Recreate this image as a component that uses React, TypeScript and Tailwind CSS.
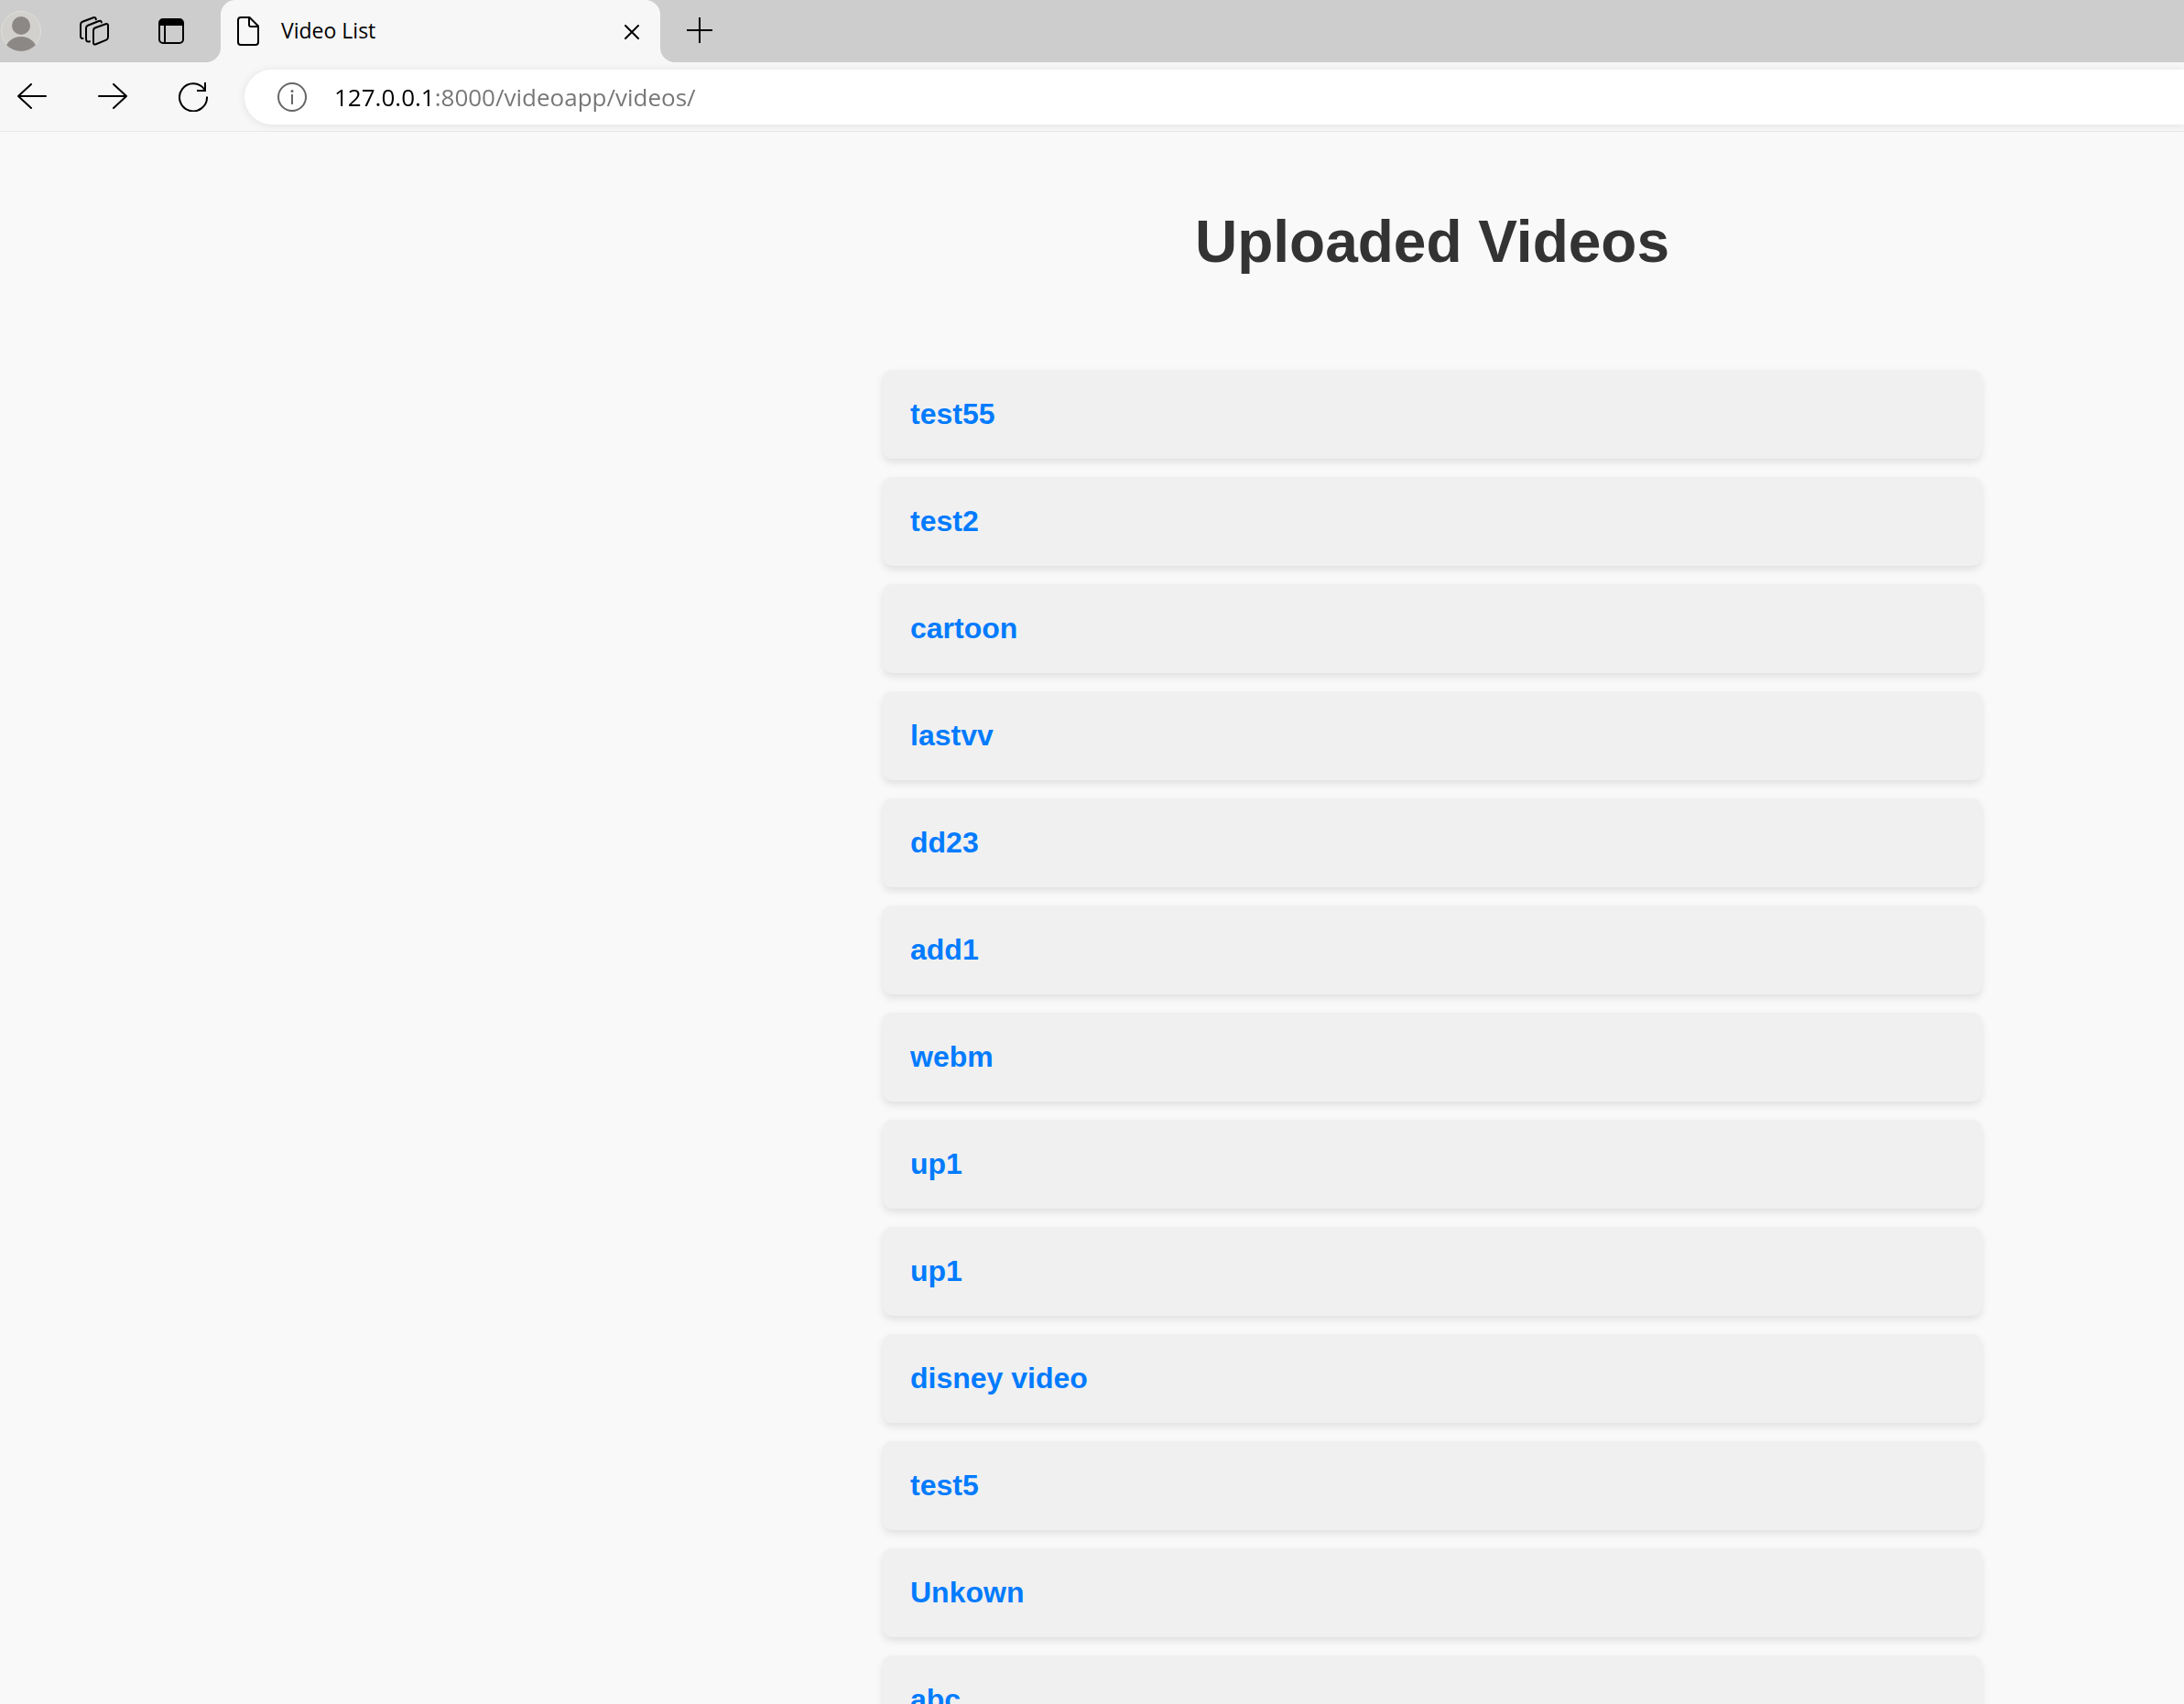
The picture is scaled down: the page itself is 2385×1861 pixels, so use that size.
import React from "react";

const videos = [
  "test55",
  "test2",
  "cartoon",
  "lastvv",
  "dd23",
  "add1",
  "webm",
  "up1",
  "up1",
  "disney video",
  "test5",
  "Unkown",
  "abc",
];

function Avatar() {
  return (
    <svg viewBox="0 0 44 44" className="size-11" aria-hidden="true">
      <defs>
        <clipPath id="avatar-clip">
          <circle cx="22" cy="22" r="22" />
        </clipPath>
      </defs>
      <circle cx="22" cy="22" r="21.5" fill="#d2d1cd" stroke="#dfded8" />
      <g clipPath="url(#avatar-clip)" fill="#8c8885">
        <circle cx="22" cy="16" r="10" />
        <path d="M4 44C6 33 13 28 22 28s16 5 18 16z" />
      </g>
    </svg>
  );
}

function WorkspacesIcon() {
  return (
    <svg viewBox="0 0 32 32" className="size-8" fill="none" stroke="#000" strokeWidth="2" strokeLinecap="round" strokeLinejoin="round" aria-hidden="true">
      <path d="M17.2 12.3 28.4 8.3Q31 7.5 31 10V22.6Q31 24.800 29 25.600L17.800 30.200Q15 31.4 15 28.600V15.4Q15 13 17.2 12.3z" />
      <path d="M11 27.2Q7 28.4 7 24.6V12.6Q7 10.6 9 9.8L21 5Q23.4 4.2 23.8 6.4" />
      <path d="M3.6 24Q1 24.4 1 21.6V9Q1 6.6 3 5.8L15 1.2Q17.6.6 17.8 3.2" />
    </svg>
  );
}

function VerticalTabsIcon() {
  return (
    <svg viewBox="0 0 28 28" className="size-7" fill="none" stroke="#000" strokeWidth="2" aria-hidden="true">
      <rect x="1" y="1" width="26" height="26" rx="4" />
      <path d="M1 8V5q0-4 4-4h18q4 0 4 4v3z" fill="#000" stroke="none" />
      <path d="M7 7v20" />
      <path d="M1 7h26" />
    </svg>
  );
}

function FileIcon() {
  return (
    <svg viewBox="0 0 24 32" className="h-8 w-6 shrink-0" fill="none" stroke="#000" strokeWidth="2" strokeLinejoin="round" aria-hidden="true">
      <path d="M4 1h9.5L23 10.500V28q0 3-3 3H4q-3 0-3-3V4q0-3 3-3z" />
      <path d="M13 1v8q0 2 2 2h8" />
    </svg>
  );
}

function CloseIcon() {
  return (
    <svg viewBox="0 0 16 16" className="size-4" fill="none" stroke="#000" strokeWidth="2" strokeLinecap="round" aria-hidden="true">
      <path d="M1 1l14 14M15 1L1 15" />
    </svg>
  );
}

function PlusIcon() {
  return (
    <svg viewBox="0 0 28 28" className="size-7" fill="none" stroke="#000" strokeWidth="2" aria-hidden="true">
      <path d="M14 0v28M0 14h28" />
    </svg>
  );
}

function BackIcon() {
  return (
    <svg viewBox="0 0 32 32" className="size-8" fill="none" stroke="#000" strokeWidth="2" strokeLinecap="round" strokeLinejoin="round" aria-hidden="true">
      <path d="M31 15H1M15 2L1 15l14 13" />
    </svg>
  );
}

function ForwardIcon() {
  return (
    <svg viewBox="0 0 32 32" className="size-8" fill="none" stroke="#000" strokeWidth="2" strokeLinecap="round" strokeLinejoin="round" aria-hidden="true">
      <path d="M1 15h30M17 2l14 13-14 13" />
    </svg>
  );
}

function RefreshIcon() {
  return (
    <svg viewBox="0 0 32 32" className="size-8" fill="none" stroke="#000" strokeWidth="2" aria-hidden="true">
      <path d="M31 15.500A15 15 0 1 1 28.500 8" />
      <path d="M29 0v9h-9" />
    </svg>
  );
}

function InfoIcon() {
  return (
    <svg viewBox="0 0 32 32" className="size-8" fill="none" stroke="#666" strokeWidth="2" aria-hidden="true">
      <circle cx="16" cy="16" r="15" />
      <path d="M16 13v11" />
      <circle cx="16" cy="9.500" r="1.500" fill="#666" stroke="none" />
    </svg>
  );
}

function TabStrip() {
  return (
    <div className="flex h-17">
      <div className="flex w-[241px] shrink-0 items-center rounded-br-2xl bg-[#cdcdcd] pl-px">
        <button type="button" aria-label="Profile">
          <Avatar />
        </button>
        <button type="button" aria-label="Workspaces" className="ml-[42px]">
          <WorkspacesIcon />
        </button>
        <button type="button" aria-label="Tab actions" className="ml-[54px]">
          <VerticalTabsIcon />
        </button>
      </div>
      <div className="bg-[linear-gradient(#cdcdcd_50%,#f7f7f7_50%)]">
        <div className="flex h-full w-[480px] items-center rounded-t-2xl bg-[#f7f7f7] pr-[23px] pl-[18px]">
          <FileIcon />
          <span className="ml-6 flex-1 pb-0.5 text-[23px] leading-8 text-black">Video List</span>
          <button type="button" aria-label="Close tab" className="pt-0.5">
            <CloseIcon />
          </button>
        </div>
      </div>
      <div className="flex flex-1 items-center rounded-bl-2xl bg-[#cdcdcd] pb-0.5 pl-[29px]">
        <button type="button" aria-label="New tab">
          <PlusIcon />
        </button>
      </div>
    </div>
  );
}

function Toolbar() {
  return (
    <div className="flex h-19 items-center border-b border-[#e8e8e8] pt-px pl-[19px]">
      <button type="button" aria-label="Back">
        <BackIcon />
      </button>
      <button type="button" aria-label="Forward" className="ml-14">
        <ForwardIcon />
      </button>
      <button type="button" aria-label="Refresh" className="ml-14">
        <RefreshIcon />
      </button>
      <div className="ml-10 flex h-15 flex-1 items-center rounded-l-full bg-white pl-9 shadow-[0_1px_10px_rgba(0,0,0,0.09)]">
        <button type="button" aria-label="Site information">
          <InfoIcon />
        </button>
        <input
          type="text"
          aria-label="Address"
          defaultValue="127.0.0.1:8000/videoapp/videos/"
          className="ml-[30px] h-10 flex-1 bg-[linear-gradient(90deg,#000_105px,#757575_105px)] bg-clip-text text-[26px] text-transparent outline-none"
        />
      </div>
    </div>
  );
}

export default function App() {
  return (
    <div className="flex h-screen flex-col overflow-hidden bg-[#f9f9f9]">
      <header className="shrink-0 bg-[#f7f7f7] font-['Open_Sans','Noto_Sans',sans-serif]">
        <TabStrip />
        <Toolbar />
      </header>
      <main className="grid min-h-0 flex-1 grid-cols-[964fr_1200px_221fr] overflow-hidden font-['Liberation_Sans',Arial,sans-serif]">
        <section className="col-start-2 pt-20">
          <h1 className="text-center text-[64px] leading-[80px] font-bold text-[#333]">Uploaded Videos</h1>
          <ul className="mt-[100px] flex flex-col gap-5">
            {videos.map((title, i) => (
              <li key={i} className="rounded-[10px] bg-[#f0f0f0] p-[30px] shadow-[0_4px_8px_rgba(0,0,0,0.1)]">
                <a href="#" className="block text-[32px] leading-[37px] font-bold text-[#007bff]">
                  {title}
                </a>
              </li>
            ))}
          </ul>
        </section>
      </main>
    </div>
  );
}
